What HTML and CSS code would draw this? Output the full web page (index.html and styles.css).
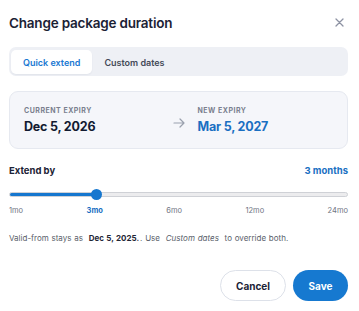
FILE: index.html
```html
<!DOCTYPE html>
<html lang="en">
<head>
    <meta charset="UTF-8">
    <meta name="viewport" content="width=device-width, initial-scale=1.0">
    <title>Change package duration</title>
    <link rel="stylesheet" href="styles.css">
</head>
<body>
    <div class="dialog">
        <div class="dialog-header">
            <h2>Change package duration</h2>
            <button class="close-btn" aria-label="Close">
                <svg width="9" height="9" viewBox="0 0 9 9">
                    <path d="M1 1L8 8M8 1L1 8" stroke="#8d92a3" stroke-width="1.3" stroke-linecap="round"/>
                </svg>
            </button>
        </div>

        <div class="tabs">
            <button class="tab active">Quick extend</button>
            <button class="tab">Custom dates</button>
        </div>

        <div class="expiry-card">
            <div class="expiry-col">
                <span class="expiry-label">Current expiry</span>
                <span class="expiry-date">Dec 5, 2026</span>
            </div>
            <svg class="arrow" width="12" height="10" viewBox="0 0 12 10">
                <path d="M1 5H11M7 1L11 5L7 9" fill="none" stroke="#9aa0ad" stroke-width="1.2" stroke-linecap="round" stroke-linejoin="round"/>
            </svg>
            <div class="expiry-col">
                <span class="expiry-label">New expiry</span>
                <span class="expiry-date new">Mar 5, 2027</span>
            </div>
        </div>

        <div class="extend-row">
            <span class="extend-label">Extend by</span>
            <span class="extend-value">3 months</span>
        </div>

        <div class="slider">
            <div class="slider-track">
                <div class="slider-fill" style="width: 87px;"></div>
            </div>
            <div class="slider-thumb" style="left: 82px;"></div>
        </div>

        <div class="ticks">
            <span>1mo</span>
            <span class="current">3mo</span>
            <span>6mo</span>
            <span>12mo</span>
            <span>24mo</span>
        </div>

        <p class="hint">
            Valid-from stays as <strong>Dec 5, 2025.</strong>. Use <em>Custom dates</em> to override both.
        </p>

        <div class="actions">
            <button class="btn btn-cancel">Cancel</button>
            <button class="btn btn-save">Save</button>
        </div>
    </div>
</body>
</html>
```

FILE: styles.css
```css
body {
    margin: 0;
    padding: 0;
    background-color: #ffffff;
    font-family: Inter, "Noto Sans", sans-serif;
    color: #1c2336;
}

.dialog {
    width: 359px;
    box-sizing: border-box;
    padding: 10px 11px 0 9px;
    display: flex;
    flex-direction: column;
}

.dialog-header {
    display: flex;
    align-items: center;
    justify-content: space-between;
    height: 25px;
}

.dialog-header h2 {
    margin: 0;
    font-size: 13.5px;
    font-weight: 600;
    letter-spacing: -0.2px;
    color: #1b2235;
}

.close-btn {
    border: none;
    background: none;
    padding: 0;
    margin-right: 4px;
    display: flex;
    cursor: pointer;
}

.tabs {
    margin-top: 12px;
    height: 29px;
    box-sizing: border-box;
    padding: 3px 2px 2px 2px;
    background-color: #eef0f5;
    border-radius: 7px;
    display: flex;
}

.tab {
    border: none;
    background: none;
    font-family: inherit;
    font-size: 9px;
    font-weight: 600;
    color: #444a58;
    padding: 0 12px;
    border-radius: 5px;
    cursor: pointer;
}

.tab.active {
    background-color: #ffffff;
    color: #1a78d2;
    box-shadow: 0 1px 2px rgba(20, 30, 60, 0.06);
}

.expiry-card {
    margin-top: 15px;
    height: 58px;
    box-sizing: border-box;
    padding: 0 14px;
    background-color: #f5f6fa;
    border: 1px solid #e6e9f0;
    border-radius: 9px;
    display: grid;
    grid-template-columns: 1fr auto 1fr;
    column-gap: 13px;
    align-items: center;
}

.expiry-col {
    display: flex;
    flex-direction: column;
    gap: 4px;
}

.expiry-label {
    font-size: 7px;
    font-weight: 700;
    letter-spacing: 0.5px;
    text-transform: uppercase;
    color: #7a7f8e;
}

.expiry-date {
    font-size: 12.5px;
    font-weight: 700;
    letter-spacing: -0.2px;
    color: #121a31;
}

.expiry-date.new {
    color: #1a6fc2;
}

.arrow {
    margin-top: 5px;
}

.extend-row {
    margin-top: 16px;
    display: flex;
    justify-content: space-between;
    align-items: center;
    font-size: 9.5px;
    font-weight: 700;
}

.extend-value {
    color: #1a6fc2;
}

.slider {
    position: relative;
    margin-top: 13px;
    height: 11px;
    display: flex;
    align-items: center;
}

.slider-track {
    width: 100%;
    height: 5px;
    box-sizing: border-box;
    border: 1px solid #cfd1d6;
    background-color: #ececee;
    border-radius: 3px;
    overflow: hidden;
}

.slider-fill {
    height: 100%;
    background-color: #1677cf;
}

.slider-thumb {
    position: absolute;
    top: 0;
    width: 11px;
    height: 11px;
    border-radius: 50%;
    background-color: #1677cf;
}

.ticks {
    margin-top: 6px;
    display: flex;
    justify-content: space-between;
    font-size: 7.5px;
    color: #6f7482;
}

.ticks .current {
    color: #1a6fc2;
    font-weight: 700;
}

.hint {
    margin: 18px 0 0 0;
    font-size: 8px;
    color: #5a5f6b;
    word-spacing: 0.5px;
}

.hint strong {
    margin: 0 1px 0 3px;
    color: #1f2636;
    font-weight: 700;
}

.hint em {
    margin: 0 3px;
}

.actions {
    margin-top: 27px;
    display: flex;
    justify-content: flex-end;
    gap: 7px;
}

.btn {
    height: 31px;
    border-radius: 16px;
    font-family: inherit;
    font-size: 10px;
    font-weight: 700;
    cursor: pointer;
}

.btn-cancel {
    width: 66px;
    background-color: #ffffff;
    border: 1px solid #dde1e9;
    color: #1c2336;
}

.btn-save {
    width: 55px;
    background-color: #1679d0;
    border: none;
    color: #ffffff;
}
```
